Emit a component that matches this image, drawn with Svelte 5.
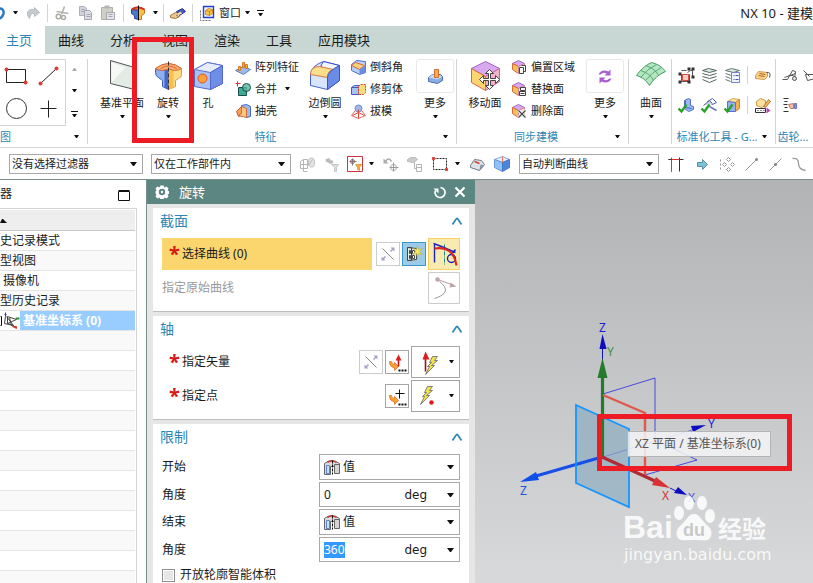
<script lang="ts">
	import { onMount } from 'svelte';

	type Tool = { icon: string; label: string; menu?: boolean };

	const tabs = ['主页', '曲线', '分析', '视图', '渲染', '工具', '应用模块'];

	const featureTools: Tool[] = [
		{ icon: 'pattern', label: '阵列特征' },
		{ icon: 'unite', label: '合并', menu: true },
		{ icon: 'shell', label: '抽壳' },
	];
	const trimTools: Tool[] = [
		{ icon: 'chamfer', label: '倒斜角' },
		{ icon: 'trim', label: '修剪体' },
		{ icon: 'draft', label: '拔模' },
	];
	const faceTools: Tool[] = [
		{ icon: 'offsetFace', label: '偏置区域' },
		{ icon: 'replaceFace', label: '替换面' },
		{ icon: 'deleteFace', label: '删除面' },
	];
	const standardTools = [
		['nodes', 'layers', 'layerList'],
		['partCheck', 'toolCheck', 'boxCheck'],
	];
	const historyRows = ['史记录模式', '型视图', ' 摄像机', '型历史记录'];

	let startAngle = $state('0');
	let endAngle = $state('360');
	let endInput: HTMLInputElement;

	onMount(() => {
		endInput.focus();
		endInput.select();
	});

	const cube =
		'<path d="M1 4 7 1l6 3-6 3z" fill="#d9a8ee" stroke="#a06cc0"/><path d="M1 4l6 3v7l-6-4z" fill="#f8bf5c" stroke="#dc6a35"/><path d="M7 7l6-3v7l-6 3z" fill="#f6dde6" stroke="#c98a9c"/>';
	const check = '<path d="M0 11l3 3 5-7" fill="none" stroke="#2ba02b" stroke-width="2.4"/>';
	const bolt = (x: number, y: number) =>
		`<path transform="translate(${x} ${y})" d="M7 0h5L9 4h3L6 9h3L0 18l4-8H2l4-4H4z" fill="#f3e34a" stroke="#666" stroke-width=".8"/>`;
	const hook =
		'<path d="M3 10q0 6 5 6v3l4-4-4-4v2q-3 0-3-3z" fill="#f8a32e" stroke="#e0702c" stroke-width=".8"/><path d="M12 18h2v2h-2zM15 18h2v2h-2zM18 18h2v2h-2z" fill="#111"/>';

	// drawn on whole pixels; every other icon sits on the half-pixel grid for crisp strokes
	const flat = ['down', 'caret', 'up', 'more', 'sort'];

	const icons: Record<string, string> = {
		down: '<path d="M0 0h7L4 4H3z" fill="#111"/>',
		caret: '<path d="M0 0h5L3 3H2z" fill="#111"/>',
		up: '<path d="M0 4h5L3 1H2z" fill="#aaa"/>',
		more: '<path d="M0 0h7v1H0zM1 3h5L4 6H3z" fill="#111"/>',
		undo: '<path d="M-4 3q8-1 7 5-1 4-4 5" fill="none" stroke="#2878c8" stroke-width="2.5"/>',
		redo: '<path d="M3 13C-1 8 1 3 8 4V2l5 5-5 4V8Q4 7 3 13z" fill="#c4cacd" stroke="#b6bcbf"/>',
		cut: '<path d="M9 1 6 9M1 6l12 2" stroke="#b3b4ac" stroke-width="1.6"/><circle cx="3" cy="11" r="2.3" fill="none" stroke="#aaaba3" stroke-width="1.5"/><circle cx="8" cy="12" r="2" fill="none" stroke="#aaaba3" stroke-width="1.5"/>',
		copy: '<path d="M3 1h5l2 2v7H3z" fill="#d2d2da" stroke="#b0b0bb"/><path d="M8 5h5l2 2v7H8z" fill="#dcdce4" stroke="#a5a5b0"/><path d="M10 9h4M10 11h4M5 4h3M5 6h3" stroke="#a5a5b0"/>',
		paste: '<path d="M1 2h11v12H1z" fill="#cfcfc6" stroke="#b0b0a5"/><path d="M4 0h5v3H4z" fill="#b5b5b5"/><path d="M6 7h8v7H6z" fill="#e4e4ea" stroke="#a5a5b0"/><path d="M8 9h4M8 11h4" stroke="#a5a5b0"/>',
		revolveSmall:
			'<path d="M0 4q6-5 13 0v4l-3 2v4H7V4z" fill="#f6c341" stroke="#df6a2e"/><path d="M0 4l7 1v9l-4-1v-3L0 8z" fill="#4a78cc" stroke="#2b3f9b"/><path d="M0 4q6-4 13 0" fill="none" stroke="#d33123" stroke-width="2"/><path d="M7 0v15" stroke="#111"/>',
		hand: '<path d="M0 9l5-3 4 1-3 2 3 1-4 2-5-1z" fill="#f3c68d" stroke="#9c7041"/><path d="M6 5l6-3 3 3-6 4z" fill="#4559c0" stroke="#2b3790"/><path d="M7 8l4-2" stroke="#f6dca2" stroke-width="2"/>',
		window:
			'<path d="M1 5v10h10" fill="none" stroke="#777" stroke-dasharray="2 1"/><path d="M4 1h10v11H4z" fill="#eef4ff" stroke="#2342cf" stroke-width="1.4"/><path d="M6 5l3-2 4 1v4l-3 2-4-1z" fill="#f8c944" stroke="#c47a1d" stroke-width=".8"/><path d="M6 5l4 1 3-2M10 6v4" fill="none" stroke="#c47a1d" stroke-width=".8"/>',

		rect: '<path d="M2 4h19v13H2z" fill="#fff" stroke="#222"/><circle cx="2" cy="4" r="2" fill="#e23b32"/><circle cx="21" cy="17" r="2" fill="#e23b32"/>',
		line: '<path d="M3 18 19 3" stroke="#222"/><circle cx="3" cy="18" r="2" fill="#e23b32"/><circle cx="19" cy="3" r="2" fill="#e23b32"/>',
		circle: '<circle cx="12" cy="10" r="10" fill="#fff" stroke="#333"/>',
		plus: '<path d="M11 2v17M3 10h16" stroke="#222"/>',

		plane: '<path d="M4 0l24 7v22L4 23z" fill="#e2ebe4" stroke="#555"/><path d="M5 2l14 5L5 22z" fill="#f6f9f6"/>',
		revolve:
			'<path d="M3 8Q16-2 29 8v6q0 3-3 4l-3 2v6l-7 3V9z" fill="#fbdc84" stroke="#e8954a"/><path d="M3 9l13 1v19l-6-3v-6l-4-3q-3-1-3-5z" fill="#8fb0ee" stroke="#3d60be"/><path d="M12 10v17l4 2V10z" fill="#4268c8"/><path d="M16 10l5-1v18l-5 2z" fill="#f8c04a"/><path d="M3 8q13-10 26 0-3 2-7 2-6-3-12 0-4 0-7-2z" fill="#f8b06c" stroke="#dc6240"/><path d="M8 8q8-5 16 0" fill="none" stroke="#dc6240"/><path d="M16 1v29" stroke="#333" stroke-dasharray="4 2"/>',
		hole: '<path d="M2 9l13-7 15 3v18l-12 6-16-3z" fill="#a9c0f3" stroke="#5468d0"/><path d="M2 9l13-7 15 3-12 7z" fill="#e6eefd" stroke="#5c72d8"/><path d="M18 12l12-7v18l-12 6z" fill="#6f8ee6" stroke="#5468d0"/><circle cx="10" cy="18" r="4.5" fill="#f9a03a" stroke="#d9562f"/>',
		pattern:
			'<path d="M0 11l8-4 7 3-7 5z" fill="#9bbcea" stroke="#5c80c4"/><path d="M3 7h2v4H3zM7 3h2v5H7zM10 5h2v4h-2z" fill="#f6ae38" stroke="#d07a2a"/>',
		unite:
			'<path d="M0 2h5M2 0v5" stroke="#db332a"/><path d="M3 6h8v8H3z" fill="#41aa92" stroke="#174e4d"/><circle cx="11" cy="6" r="4" fill="#5ab8a0" fill-opacity=".8" stroke="#174e4d"/>',
		shell:
			'<path d="M6 2l5-1 4 2v10l-4 1z" fill="#9cbaf0" stroke="#4767bd"/><path d="M1 8l5-5v9l-3 1z" fill="#f3a05b" stroke="#ca5a32"/><path d="M6 3l5 2v9l-8-2 3-2z" fill="#fac880" stroke="#d56a40"/>',
		blend:
			'<path d="M1 14Q2 5 14 1l16 4v15l-12 9-17-4z" fill="#d9e5fb" stroke="#4562cc"/><path d="M14 1l16 4-7 5-12-4z" fill="#f2f6ff" stroke="#3848d8"/><path d="M1 14q0-8 9-8l14 3q-6 1-6 8z" fill="#fbdf8a" stroke="#e0764a"/><path d="M18 17q0-6 12-12v15l-12 9z" fill="#6a8ce6" stroke="#3555c8"/>',
		chamfer:
			'<path d="M1 5l5-4 9 1v11l-6 2-8-4z" fill="#b9cff8" stroke="#5070cc"/><path d="M1 6l4-3 9 3-5 4z" fill="#f8cf7a" stroke="#dc6a48"/><path d="M9 10l6-4v7l-6 2z" fill="#6a8ce6"/>',
		trim: '<path d="M1 6l3-2h5v9H1z" fill="#a9c2f4" stroke="#4159c3"/><path d="M1 6h7v7" fill="none" stroke="#4159c3"/><path d="M8 5l2-2h5v8l-2 2H8z" fill="#f8dc77" stroke="#cc4332" stroke-dasharray="2 1"/>',
		draft:
			'<path d="M8 3 1 12l7 3 7-3z" fill="#fff" stroke="#e06a60"/><circle cx="8" cy="5" r="3.5" fill="#9fb9ed" stroke="#6f8bd0"/><path d="M8 6v9M2 12l6-3 6 3" fill="none" stroke="#dc4537"/>',
		moreFeature:
			'<path d="M9 17l4-3h8l2 2v4l-5 3-9-2z" fill="#88aee5" stroke="#4a6ba9"/><path d="M9 17l9 2 5-3-5-2h-5z" fill="#c4d8f4"/><path d="M15 9h4v8h-4z" fill="#f8a952" stroke="#d56c2b"/>',
		moveFace:
			'<path d="M2 8l14-7 14 7-14 8z" fill="#d8a9ef" stroke="#a45fc8"/><path d="M2 8l14 8v14L2 22z" fill="#fcd570" stroke="#e0624a"/><path d="M16 16l14-8v13l-14 9z" fill="#f3b2cc" stroke="#cc6a9a"/><path d="M20 9l4 4h-3v5h5v-3l4 4-4 4v-3h-5v5h3l-4 4-4-4h3v-5h-5v3l-4-4 4-4v3h5v-5h-3z" fill="#fff" stroke="#444"/>',
		offsetFace: cube + '<path d="M8 8h4v6H8zM10 6h4v6h-2" fill="#fff" stroke="#444"/>',
		replaceFace: cube + '<path d="M9 6h5v3H9zM8 10h6v4H8z" fill="#fff" stroke="#444"/><path d="M9 12h4" stroke="#444"/>',
		deleteFace: cube + '<path d="M7 7l7 7M14 7l-7 7" stroke="#fff" stroke-width="3"/><path d="M7 7l7 7M14 7l-7 7" stroke="#444" stroke-width="1.2"/>',
		moreSync:
			'<path d="M9 14q3-6 10-3l2-2v6h-6l2-2q-3-2-6 1zM22 18q-3 6-10 3l-2 2v-6h6l-2 2q3 2 6-1z" fill="#a95fce"/>',
		surface:
			'<path d="M1 15Q7 6 16 2q9 2 14 9-10 4-16 14Q9 17 1 15z" fill="#b4e6c0" stroke="#4c9c6a"/><path d="M5 10q10 3 13 10M10 5q10 3 13 10M5 17Q12 8 21 4M10 20q7-9 16-13" fill="none" stroke="#5aa878"/>',

		nodes: '<path d="M3 3h5M12 3h2v6M3 13V7h8v7H3zM9 5l3-2" fill="none" stroke="#555"/><path d="M4 7h6v6H4z" fill="#fbd0c4" stroke="#dc4b3e"/><path d="M0 5h3v3H0zM9 0h3v3H9zM13 0h3v3h-3zM13 8h3v3h-3zM0 13h3v3H0zM9 13h3v3H9z" fill="#333"/>',
		layers:
			'<path d="M1 3l6-2 8 2-7 2z" fill="#d8ece2" stroke="#55645e"/><path d="M1 6l7 2 7-2M1 9l7 2 7-2M1 12l7 3 7-3" fill="none" stroke="#55645e"/>',
		layerList:
			'<path d="M1 3l6-2 8 2-6 2z" fill="#d8ece2" stroke="#66756f"/><path d="M1 6l6 2M1 9l5 2M1 12l5 2" fill="none" stroke="#66756f"/><path d="M7 5h8v10H7z" fill="#f1f3ff" stroke="#7482cc"/><path d="M9 8h1M11 8h3M9 12h1M11 12h3" stroke="#4251ba"/>',
		tag: '<path d="M1 8l3-4 9 1v4l-3 3-9-1z" fill="#fbd18a" stroke="#d39a4a"/><path d="M5 6l6 1M4 8l6 1" stroke="#a76522"/><path d="M12 5q5-1 3 5" fill="none" stroke="#555"/>',
		partCheck:
			'<path d="M6 3l4-2 2 1v6l3 1v3l-5 2-4-3z" fill="#9bb8f2" stroke="#5470c4"/><path d="M7 3v7l6 1" fill="none" stroke="#4464c8"/>' + check,
		toolCheck:
			'<path d="M6 4l5-3 4 4-4 2z" fill="#fff" stroke="#4458ce"/><path d="M2 8l6-5 3 3" fill="#c4d2f4" stroke="#667"/><path d="M8 9l7 4" stroke="#6b7ac0" stroke-width="1.6"/>' + check,
		boxCheck:
			'<path d="M3 4l5-3 7 1-4 3z" fill="#fbe29f" stroke="#d9a24a"/><path d="M11 5l4-3v9l-4 3z" fill="#f8b04a" stroke="#d58438"/><path d="M3 4l8 1v9H3z" fill="#94b2f2" stroke="#5873ca"/>' + check,
		nameEdit:
			'<path d="M2 4l4-3 5 2v5l-4 2-5-2z" fill="#fae39d" stroke="#cf954a"/><path d="M9 9l5-7 2 2-5 6z" fill="#f6b750" stroke="#9c6838" stroke-width=".8"/><path d="M1 11h10v4H1z" fill="#fff" stroke="#333"/><path d="M3 13h1M6 13h1M9 13h1" stroke="#222"/><path d="M12 10l4 3-4 3z" fill="#bb42b6"/>',
		gearA: '<path d="M0 12h5l5-9 3 1-1 7M6 8h5M2 10l11-4" fill="none" stroke="#555"/><circle cx="12" cy="11" r="2" fill="#ddd" stroke="#555"/>',
		gearB: '<path d="M1 3l6 6M3 7h8l3-5M3 7l2 6 8-2" fill="none" stroke="#555"/>',
		gearHand:
			'<path d="M1 1h5M2 4h3M1 7h4M2 10h3M1 14h5" stroke="#333"/><path d="M6 7l5-1v5H8z" fill="#f5c1a3" stroke="#b97b5c"/><path d="M12 6h2v5h-2z" fill="#8894dc" stroke="#6874c6"/>',

		assembly:
			'<path d="M1 5l3-2h4v9H1zM1 8h7M4 3v12h4" fill="none" stroke="#b5b5b5"/><ellipse cx="12" cy="6" rx="3" ry="4.5" fill="#e4e4e4" stroke="#bbb"/><path d="M9 9l4-6" stroke="#bbb"/>',
		filterUndo:
			'<path d="M2 3q5-3 5 1 4-1 2 3-4 1-4-1-3 0-3-3z" fill="#bbb"/><path d="M8 8h7l-2 3v4h-2v-4z" fill="#ddd" stroke="#c8c8c8"/>',
		pickFilter:
			'<path d="M0 0h15v15H0z" fill="#fff" stroke="#cf3340"/><circle cx="5" cy="5" r="2" fill="none" stroke="#c05068"/><path d="M5 2v7M2 5h7" stroke="#777"/><path d="M8 8h6l-2 3v3l-2-1v-2z" fill="#f6b03a" stroke="#d99030" stroke-width=".8"/>',
		rotatePoint:
			'<path d="M8 5Q5 0 2 5" fill="none" stroke="#aaa" stroke-width="1.6"/><path d="M0 2v5h5z" fill="#aaa"/><circle cx="10" cy="11" r="3" fill="none" stroke="#aaa"/><path d="M10 6v9M6 11h9" stroke="#999"/>',
		treeHand: '<path d="M0 3l3-2h5l2 2-4 3-6-1z" fill="#ccc" stroke="#bbb"/><path d="M9 8h5v7H9zM9 11h5M7 6v6h2" fill="none" stroke="#b5b5b5"/>',
		marquee:
			'<path d="M2 3h13v11H2z" fill="none" stroke="#222" stroke-dasharray="2 1"/><path d="M1 2h2v2H1zM14 13h2v2h-2z" fill="#e23b32" stroke="#e23b32"/>',
		roundBody:
			'<path d="M1 9l4-6 7 1 3 4-5 6-9-3z" fill="#dde2e8" stroke="#717987"/><path d="M11 8l4 1-5 5z" fill="#8793a7"/><path d="M5 5l5 2" stroke="#d73b33" stroke-width="1.5"/>',
		blueCube:
			'<path d="M1 4l8-3 7 3-7 3z" fill="#e5effe" stroke="#88a4e0"/><path d="M1 4l8 3v9l-8-4z" fill="#8ec2f6" stroke="#6a98dc"/><path d="M9 7l7-3v8l-7 4z" fill="#4a86de" stroke="#4a78c8"/><path d="M9 1v6" stroke="#e67c62"/>',
		cross: '<path d="M4 8v8M12 2v14M12 4h4" fill="none" stroke="#333"/><path d="M4 2v14M1 4h11" fill="none" stroke="#df2f2c"/><path d="M1 4h3" stroke="#333"/>',
		arrowRight: '<path d="M4 6h5V3l5 5-5 5v-3H4z" fill="#79c5d5" stroke="#5a8fac"/>',
		quad: '<path d="M1 3v2M1 7v2M1 11v2" stroke="#999"/><path d="M9 1l2 2-2 2-2-2zM9 11l2 2-2 2-2-2zM5 6l2 2-2 2-2-2zM13 6l2 2-2 2-2-2z" fill="#fff" stroke="#999"/>',
		segment: '<path d="M2 14 13 3" stroke="#999"/><circle cx="13" cy="3" r="1.5" fill="#888"/>',
		midpoint: '<path d="M2 14 14 2" stroke="#999"/><circle cx="8" cy="8" r="1.6" fill="#888"/>',
		spline: '<path d="M1 2q6-1 6 5t7 7" fill="none" stroke="#999" stroke-width="1.3"/>',

		maximize: '<path d="M0 1h11v9H0z" fill="none" stroke="#111"/><path d="M0 0h11" stroke="#111"/>',
		sort: '<path d="M0 5h7L3 1H2z" fill="#111"/>',
		csys: '<path d="M0 4h1v9H0" fill="none" stroke="#111"/><path d="M6 4l7 9-6-2V4l9 3-9 4M9 5l2 8M5 4l-1 7 9 2" fill="none" stroke="#444"/><path d="M5 0v4M4 2h2" stroke="#2330d0"/><path d="M15 5h4v2h-3z" fill="#22922e"/><path d="M12 14h4v2z" fill="#d23a30" stroke="#d23a30"/>',

		gear: '<path d="M5 0h3l1 2 2-1 2 2-1 2 2 1v2l-2 1 1 2-2 2-2-1-1 2H5l-1-2-2 1-2-2 1-2-1-1V6l1-1-1-2 2-2 2 1z" fill="#fff"/><circle cx="6.5" cy="6.5" r="3.2" fill="#5c8681"/><circle cx="6.5" cy="6.5" r="1.2" fill="#fff"/>',
		reset: '<path d="M8 2a5 5 0 1 1-5 3" fill="none" stroke="#fff" stroke-width="1.7"/><path d="M1 3h5v5z" fill="#fff"/>',
		close: '<path d="M1 1l9 9M10 1l-9 9" stroke="#fff" stroke-width="2.2"/>',
		collapse: '<path d="M1 8l4-6h1l4 6" fill="none" stroke="#2b86b4" stroke-width="1.7"/>',
		flip: '<path d="M5 5l11 11" stroke="#888"/><path d="M5 16l3-3M13 8l3-3" stroke="#a6a3c8" stroke-width="1.5"/><path d="M13 4h4v4zM4 13v4h4z" fill="#a6a3c8"/>',
		sketch:
			'<path d="M4 4h4v13H4zM4 4l9 1v11l-9 1" fill="#e4efe8" stroke="#444"/><path d="M6 7h1v3H6zM9 7h2v3H9zM6 12h1v3H6zM9 12h2v3H9z" fill="#fff" stroke="#444"/><path d="M14 2l1 4 4-1-3 3 3 3-4-1-1 4-1-4-4 1 3-3-2-3 3 1z" fill="#f8e860" stroke="#b8a74b" stroke-width=".6"/>',
		curveRule:
			'<path d="M5 5v18" stroke="#1724be" stroke-width="1.4"/><path d="M15 5v20" stroke="#18837c" stroke-dasharray="4 1 1 1"/><circle cx="22" cy="19" r="4" fill="none" stroke="#1724be" stroke-width="1.4"/><path d="M4 4l8 3 14 6M22 15l4-5" fill="none" stroke="#1724be" stroke-width="1.4"/><path d="M5 9q19-3 22 17" fill="none" stroke="#df251b" stroke-width="2.2"/>',
		originCurve:
			'<circle cx="8" cy="6" r="2.2" fill="#bda6a8"/><path d="M8 6l14 5" stroke="#bda6a8" stroke-width="1.2"/><path d="M21 9l6 4-7 1z" fill="#bda6a8"/><path d="M10 8q14 11-5 17" fill="none" stroke="#999"/>',
		vectorDialog: hook + '<path d="M12 15V8" stroke="#c60f13" stroke-width="1.6"/><path d="M9 9l3-6 3 6z" fill="#d81e1d"/>',
		pointDialog: hook + '<path d="M13 4v9M9 8h9" stroke="#111"/>',
		vectorInfer: '<path d="M5 22V7" stroke="#9d1119" stroke-width="1.6"/><path d="M2 10l3-8 4 8z" fill="#db1c20"/>' + bolt(5, 7),
		pointInfer: bolt(0, 3) + '<circle cx="11" cy="19" r="2.2" fill="#dd171a"/>',
		limit: '<path d="M0 4q7-6 15 0v9l-4 1V7H6v8H0z" fill="#d8dade" stroke="#666"/><path d="M2 6h3v8H2z" fill="#cfe0fc" stroke="#5b83d0"/><path d="M10 5h5v9h-5z" fill="#d4d4d4" stroke="#666"/><path d="M3 3q4-3 9 0" fill="none" stroke="#d72e26" stroke-width="1.4"/><path d="M8 1v14" stroke="#111" stroke-dasharray="3 1"/>',
	};
</script>

{#snippet icon(name: string, w: number, h: number)}
	{@const origin = flat.includes(name) ? 0 : -0.5}
	<svg class="icon" width={w} height={h} viewBox="{origin} {origin} {w} {h}" aria-hidden="true">{@html icons[name]}</svg>
{/snippet}

{#snippet bigTool(name: string, label: string, menu: boolean, framed: boolean)}
	<button class="big" class:framed>
		<span class="picture">{@render icon(name, 32, 32)}</span>
		<span>{label}</span>
		{#if menu}{@render icon('caret', 5, 4)}{/if}
	</button>
{/snippet}

{#snippet toolColumn(tools: Tool[])}
	<div class="column">
		{#each tools as tool}
			<button>
				{@render icon(tool.icon, 16, 16)}
				<span>{tool.label}</span>
				{#if tool.menu}<span class="menu">{@render icon('caret', 5, 4)}</span>{/if}
			</button>
		{/each}
	</div>
{/snippet}

{#snippet filter(label: string, narrow: boolean)}
	<span class="combo filter" class:narrow>
		<select aria-label={label}><option>{label}</option></select>
		{@render icon('down', 7, 4)}
	</span>
{/snippet}

{#snippet cardTitle(title: string)}
	<h3><button>{title}{@render icon('collapse', 12, 10)}</button></h3>
{/snippet}

<div class="app">
	<header class="titlebar">
		<div class="quick">
			<button aria-label="撤销">{@render icon('undo', 5, 16)}</button>
			<button class="drop" aria-label="撤销列表">{@render icon('caret', 5, 4)}</button>
			<button aria-label="重做">{@render icon('redo', 14, 16)}</button>
			<i class="rule"></i>
			<button aria-label="剪切">{@render icon('cut', 14, 16)}</button>
			<button aria-label="复制">{@render icon('copy', 17, 16)}</button>
			<button aria-label="粘贴">{@render icon('paste', 16, 16)}</button>
			<i class="rule"></i>
			<button aria-label="旋转">{@render icon('revolveSmall', 14, 16)}</button>
			<button class="drop" aria-label="更多命令">{@render icon('caret', 5, 4)}</button>
		</div>
		<div class="quick window">
			<i class="rule"></i>
			<button aria-label="触控">{@render icon('hand', 16, 14)}</button>
			<i class="rule"></i>
			<button class="window-menu">
				{@render icon('window', 17, 16)}窗口<span class="drop">{@render icon('caret', 5, 4)}</span>
			</button>
			<button aria-label="自定义">{@render icon('more', 7, 7)}</button>
		</div>
		<span class="product">NX 10 - 建模</span>
	</header>

	<nav class="tabs">
		{#each tabs as tab, i}
			<button class:active={i === 0}>{tab}</button>
		{/each}
	</nav>

	<div class="ribbon">
		<section class="group sketch">
			<div class="tools">
				<div class="gallery">
					{#each ['rect', 'line', 'circle', 'plus'] as shape}
						<button aria-label={shape}>{@render icon(shape, 24, 22)}</button>
					{/each}
				</div>
				<div class="scroller">
					<button aria-label="上一行">{@render icon('up', 5, 4)}</button>
					<button aria-label="下一行">{@render icon('caret', 5, 4)}</button>
					<button aria-label="展开">{@render icon('more', 7, 7)}</button>
				</div>
			</div>
			<footer><span>图</span>{@render icon('caret', 5, 4)}</footer>
		</section>
		<section class="group feature">
			<div class="tools">
				{@render bigTool('plane', '基准平面', true, false)}
				{@render bigTool('revolve', '旋转', true, false)}
				{@render bigTool('hole', '孔', false, false)}
				{@render toolColumn(featureTools)}
				{@render bigTool('blend', '边倒圆', true, false)}
				{@render toolColumn(trimTools)}
				{@render bigTool('moreFeature', '更多', true, true)}
			</div>
			<footer><span>特征</span>{@render icon('caret', 5, 4)}</footer>
		</section>
		<section class="group sync">
			<div class="tools">
				{@render bigTool('moveFace', '移动面', false, false)}
				{@render toolColumn(faceTools)}
				{@render bigTool('moreSync', '更多', true, true)}
			</div>
			<footer><span>同步建模</span>{@render icon('caret', 5, 4)}</footer>
		</section>
		<section class="group surface">
			<div class="tools">{@render bigTool('surface', '曲面', true, false)}</div>
		</section>
		<section class="group standard">
			<div class="tools">
				{#each standardTools as row, i}
					<div class="strip">
						{#each row as name}
							<button aria-label={name}>{@render icon(name, 17, 17)}</button>
						{/each}
						<i class="rule"></i>
						<button aria-label="属性">{@render icon(i === 0 ? 'tag' : 'nameEdit', 17, 17)}</button>
					</div>
				{/each}
			</div>
			<footer><span>标准化工具 - G...</span>{@render icon('caret', 5, 4)}</footer>
		</section>
		<section class="group gears">
			<div class="tools">
				<div class="strip">
					<button aria-label="圆柱齿轮">{@render icon('gearA', 16, 16)}</button>
					<button aria-label="锥齿轮">{@render icon('gearB', 16, 16)}</button>
				</div>
				<div class="strip">
					<button aria-label="弹簧">{@render icon('gearHand', 16, 16)}</button>
				</div>
			</div>
			<footer><span>齿轮...</span></footer>
		</section>
	</div>

	<div class="selection">
		{@render filter('没有选择过滤器', true)}
		{@render filter('仅在工作部件内', false)}
		<button aria-label="装配">{@render icon('assembly', 16, 16)}</button>
		<button aria-label="重置过滤器">{@render icon('filterUndo', 16, 16)}</button>
		<button class="split" aria-label="选择过滤">{@render icon('pickFilter', 16, 16)}{@render icon('caret', 6, 4)}</button>
		<button aria-label="旋转点">{@render icon('rotatePoint', 16, 16)}</button>
		<button aria-label="导航">{@render icon('treeHand', 16, 16)}</button>
		<button class="split" aria-label="框选">{@render icon('marquee', 18, 18)}{@render icon('caret', 6, 4)}</button>
		<button aria-label="实体">{@render icon('roundBody', 16, 16)}</button>
		<button aria-label="面">{@render icon('blueCube', 18, 18)}</button>
		{@render filter('自动判断曲线', false)}
		<button aria-label="相交处停止">{@render icon('cross', 18, 18)}</button>
		<button aria-label="跟随圆角">{@render icon('arrowRight', 18, 16)}</button>
		<button aria-label="象限">{@render icon('quad', 16, 16)}</button>
		<button aria-label="端点">{@render icon('segment', 16, 16)}</button>
		<button aria-label="中点">{@render icon('midpoint', 16, 16)}</button>
		<button aria-label="样条">{@render icon('spline', 16, 16)}</button>
	</div>

	<main>
		<aside class="navigator">
			<header>器<button aria-label="最大化">{@render icon('maximize', 12, 11)}</button></header>
			<ul>
				<li class="head">{@render icon('sort', 7, 5)}</li>
				{#each historyRows as row}
					<li>{row}</li>
				{/each}
				<li class="selected">{@render icon('csys', 20, 18)}<strong>基准坐标系 (0)</strong></li>
				{#each Array(14) as _}
					<li></li>
				{/each}
			</ul>
		</aside>

		<form class="dialog" onsubmit={(e) => e.preventDefault()}>
			<header>
				{@render icon('gear', 14, 14)}
				<h2>旋转</h2>
				<button type="button" aria-label="重置">{@render icon('reset', 14, 14)}</button>
				<button type="button" aria-label="关闭">{@render icon('close', 12, 12)}</button>
			</header>
			<section class="card">
				{@render cardTitle('截面')}
				<div class="row">
					<span class="pick current"><b>*</b>选择曲线 (0)</span>
					<button class="tool dim" aria-label="反向">{@render icon('flip', 22, 22)}</button>
					<button class="tool pressed" aria-label="绘制截面">{@render icon('sketch', 22, 22)}</button>
					<button class="tool large hot" aria-label="曲线">{@render icon('curveRule', 30, 30)}</button>
				</div>
				<div class="row">
					<span class="pick muted">指定原始曲线</span>
					<button class="tool large dim" aria-label="原始曲线">{@render icon('originCurve', 30, 30)}</button>
				</div>
			</section>
			<section class="card">
				{@render cardTitle('轴')}
				<div class="row">
					<span class="pick"><b>*</b>指定矢量</span>
					<button class="tool dim" aria-label="反向">{@render icon('flip', 22, 22)}</button>
					<button class="tool" aria-label="矢量对话框">{@render icon('vectorDialog', 22, 22)}</button>
					<button class="tool wide" aria-label="自动判断的矢量">{@render icon('vectorInfer', 22, 26)}{@render icon('caret', 5, 4)}</button>
				</div>
				<div class="row">
					<span class="pick"><b>*</b>指定点</span>
					<button class="tool" aria-label="点对话框">{@render icon('pointDialog', 22, 22)}</button>
					<button class="tool wide" aria-label="自动判断的点">{@render icon('pointInfer', 22, 26)}{@render icon('caret', 5, 4)}</button>
				</div>
			</section>
			<section class="card limits">
				{@render cardTitle('限制')}
				<div class="field">
					<label for="start">开始</label>
					<span class="combo">
						{@render icon('limit', 16, 16)}
						<select id="start"><option>值</option></select>
						{@render icon('down', 7, 4)}
					</span>
				</div>
				<div class="field">
					<label for="start-angle">角度</label>
					<span class="combo">
						<input id="start-angle" bind:value={startAngle} />
						<span class="unit">deg</span>
						{@render icon('down', 7, 4)}
					</span>
				</div>
				<div class="field">
					<label for="end">结束</label>
					<span class="combo">
						{@render icon('limit', 16, 16)}
						<select id="end"><option>值</option></select>
						{@render icon('down', 7, 4)}
					</span>
				</div>
				<div class="field">
					<label for="end-angle">角度</label>
					<span class="combo">
						<input id="end-angle" bind:value={endAngle} bind:this={endInput} />
						<span class="unit">deg</span>
						{@render icon('down', 7, 4)}
					</span>
				</div>
				<label class="check"><input type="checkbox" />开放轮廓智能体积</label>
			</section>
		</form>

		<div class="viewport">
			<svg class="scene" width="338" height="403" viewBox="475 180 338 403">
				<!-- datum planes -->
				<path d="M603 394l52-16v62l42 20-52 15" fill="none" stroke="#3a3ae0" stroke-width=".9" />
				<path d="M603 457l89-27" stroke="#6a6ae0" stroke-width=".9" />
				<path d="M576 405l53 24v78l-53-24z" fill="#7ca4bd" fill-opacity=".55" />
				<path d="M602.5 457V345" stroke="#1111c8" />
				<path d="M602.5 334l4 15h-7z" fill="#0c0cc0" />
				<path d="M602.5 457v-80" stroke="#257b2b" stroke-width="3.2" />
				<path d="M602.5 358l5 20h-10z" fill="#257b2b" />
				<path d="M603 395l42 18v62" fill="none" stroke="#e2574c" stroke-width="2.4" />
				<path d="M602 457l-66 19" stroke="#174fe8" stroke-width="3.2" />
				<path d="M520 482l16-10 3 8z" fill="#0f4ee8" />
				<path d="M602 457l53 24" stroke="#b02a32" stroke-width="3.2" />
				<path d="M670 488l-14-11-4 8z" fill="#d83232" />
				<path d="M670 488l8 4" stroke="#1111c8" />
				<path d="M687 495l-9-8-4 6z" fill="#0c0cc0" />
				<path d="M706 425l-15 1 2 6z" fill="#0c0cc0" />
				<path d="M576 405l53 24v78l-53-24z" fill="none" stroke="#1596ff" stroke-width="1.8" />
				<text x="599" y="332" fill="#1b1bd0">Z</text>
				<text x="607" y="356" fill="#3b9343">Y</text>
				<text x="708" y="428" fill="#1b1bd0">Y</text>
				<text x="520" y="495" fill="#2050e8">Z</text>
				<text x="662" y="500" fill="#d83232">X</text>
				<text x="688" y="502" fill="#4c4cd8">X</text>
				<!-- watermark -->
				<g fill="#fff" fill-opacity=".85">
					<text class="brand" x="623" y="538">Bai</text>
					<ellipse cx="679" cy="513" rx="5" ry="7" />
					<ellipse cx="689" cy="503" rx="5" ry="7" />
					<ellipse cx="702" cy="503" rx="5" ry="7" />
					<ellipse cx="710" cy="516" rx="5" ry="7" />
					<path d="M694 514c5 0 7 5 11 9 4 4 8 7 6 13-2 6-8 4-17 4s-15 2-17-4c-2-6 2-9 6-13 4-4 6-9 11-9z" />
					<text class="du" x="683" y="536">du</text>
					<text class="cjk" x="718" y="538">经验</text>
					<text class="site" x="624" y="560">jingyan.baidu.com</text>
				</g>
			</svg>
			<div class="tooltip">XZ 平面 / 基准坐标系(0)</div>
			<div class="callout plane-callout"></div>
		</div>
	</main>
	<div class="callout revolve-callout"></div>
</div>

<style>
	:global(body) {
		background: #fff;
		overflow: hidden;
	}

	.app {
		position: relative;
		display: flex;
		flex-direction: column;
		height: 100vh;
		overflow: hidden;
		color: #1a1a1a;
		font: 12px/16px 'Noto Sans', 'Noto Sans CJK SC', sans-serif;
		white-space: nowrap;
	}

	button,
	input,
	select {
		margin: 0;
		padding: 0;
		border: 0;
		background: none;
		color: inherit;
		font: inherit;
	}

	button {
		display: flex;
		align-items: center;
		flex: none;
	}

	input,
	select {
		appearance: none;
		outline: 0;
		min-width: 0;
		flex: 1;
	}

	input::selection {
		background: #3399ff;
		color: #fff;
	}

	.icon {
		display: block;
		flex: none;
	}

	.rule {
		width: 1px;
		height: 18px;
		background: #d4d4d4;
	}

	/* title bar */
	.titlebar,
	.quick {
		display: flex;
		align-items: center;
		flex: none;
	}

	.titlebar {
		height: 26px;
	}

	.quick {
		gap: 7px;
	}

	.quick.window {
		gap: 6px;
		margin-left: 4px;
	}

	.drop {
		padding: 0 1px;
	}

	.window-menu {
		gap: 3px;
		font-size: 11px;
	}

	.product {
		margin-left: auto;
		font-size: 13px;
	}

	/* tabs */
	.tabs {
		display: flex;
		flex: none;
		height: 28px;
		background: #c8d7d4;
		font-size: 13px;
	}

	.tabs button {
		padding: 0 13px;
	}

	.tabs .active {
		padding-left: 6px;
		background: #fff;
		color: #2b86b4;
	}

	/* ribbon */
	.ribbon {
		display: flex;
		flex: none;
		padding: 5px 0 3px;
		border-bottom: 1px solid #d8d8d8;
		font-size: 11px;
	}

	.group {
		display: flex;
		flex-direction: column;
		box-sizing: border-box;
		flex: none;
		height: 85px;
		border-right: 1px solid #d4d4d4;
	}

	.tools {
		display: flex;
		flex: 1;
	}

	.group footer {
		display: flex;
		align-items: center;
		height: 14px;
		padding: 2px 8px 0 0;
		color: #2b86b4;
	}

	.group footer span {
		flex: 1;
		text-align: center;
	}

	.sketch {
		width: 88px;
	}

	.sketch footer span {
		text-align: left;
	}

	.gallery {
		display: grid;
		grid-template-columns: 32px 33px;
		place-items: center;
		height: 65px;
		border: 1px solid #d4d4d4;
		border-left: 0;
	}

	.scroller {
		display: flex;
		flex-direction: column;
		align-items: center;
		gap: 18px;
		padding: 8px 0 0 5px;
	}

	.feature {
		width: 369px;
	}

	.feature .tools {
		padding-left: 12px;
	}

	.big {
		flex-direction: column;
		align-self: flex-start;
		width: 44px;
		padding-top: 1px;
	}

	.big .picture {
		margin-bottom: 3px;
	}

	.big > .icon {
		margin-top: 4px;
	}

	.big.framed {
		width: 38px;
		margin-left: 9px;
		padding: 0;
	}

	.framed .picture {
		padding: 0 2px;
		border: 1px solid #e8e8e8;
		border-radius: 3px;
		margin-bottom: 2px;
	}

	.column {
		display: flex;
		flex-direction: column;
		gap: 6px;
		width: 66px;
	}

	.column button {
		gap: 4px;
	}

	.column .menu {
		margin-left: 4px;
	}

	.feature .big:nth-child(2) {
		width: 48px;
	}

	.feature .big:nth-child(3) {
		width: 32px;
	}

	.feature .column {
		width: 68px;
		margin-left: 11px;
	}

	.feature .big + .column:nth-child(6) {
		width: 57px;
		margin-left: 3px;
	}

	.sync {
		width: 172px;
	}

	.sync .tools {
		padding-left: 6px;
	}

	.sync .column {
		margin-left: 4px;
	}

	.surface {
		width: 43px;
	}

	.standard {
		width: 104px;
	}

	.standard .tools,
	.gears .tools {
		flex-direction: column;
		padding: 1px 0 0 6px;
	}

	.strip {
		display: flex;
		align-items: center;
		gap: 6px;
		height: 30px;
	}

	.gears {
		border-right: 0;
	}

	.gears .strip {
		gap: 4px;
	}

	/* selection bar */
	.selection {
		display: flex;
		align-items: center;
		flex: none;
		gap: 8px;
		height: 31px;
		padding-left: 9px;
		border-bottom: 1px solid #78908d;
	}

	.combo {
		display: flex;
		align-items: center;
		box-sizing: border-box;
		flex: none;
		gap: 3px;
		padding: 0 5px 0 4px;
		border: 1px solid #a9a9a9;
		background: #fff;
	}

	.filter {
		width: 140px;
		height: 20px;
		padding-left: 2px;
		font-size: 11px;
	}

	.filter.narrow {
		width: 134px;
	}

	.split {
		gap: 6px;
	}

	main {
		display: flex;
		flex: 1;
		min-height: 0;
	}

	/* part navigator */
	.navigator {
		box-sizing: border-box;
		flex: none;
		width: 147px;
		border-right: 1px solid #78908d;
		overflow: hidden;
	}

	.navigator header {
		display: flex;
		align-items: center;
		justify-content: space-between;
		height: 28px;
		padding-right: 16px;
	}

	.navigator header button {
		padding-top: 3px;
	}

	.navigator ul {
		margin: 0 9px 0 0;
		padding: 1px 1px 0 0;
		border: 1px solid #d4d4d4;
		border-left: 0;
		list-style: none;
	}

	.navigator li {
		display: flex;
		align-items: center;
		box-sizing: border-box;
		height: 20px;
		border-bottom: 1px solid #e4e4e4;
		white-space: pre;
	}

	.navigator li:nth-child(odd) {
		background: #f9f9f9;
	}

	.navigator .head {
		height: 21px;
		border-color: #c8c8c8;
	}

	.navigator li.head {
		background: #eee;
	}

	.navigator strong {
		flex: 1;
		padding-left: 3px;
		background: #99ccff;
		color: #fff;
		line-height: 19px;
	}

	/* revolve dialog */
	.dialog {
		flex: none;
		width: 328px;
		background: #e6e6e6;
		overflow: hidden;
	}

	.dialog header {
		display: flex;
		align-items: center;
		gap: 8px;
		height: 24px;
		padding: 0 9px 0 8px;
		background: #5c8681;
		color: #fff;
	}

	.dialog h2 {
		flex: 1;
		margin: 0 0 0 2px;
		font-size: 13px;
		font-weight: 400;
	}

	.card {
		box-sizing: border-box;
		height: 104px;
		margin: 4px 6px 0;
		padding: 0 9px;
		border-bottom: 1px solid #bdbdbd;
		background: #fff;
	}

	.card.limits {
		height: auto;
	}

	.card h3 {
		margin: 0 -4px 4px -2px;
		color: #2b86b4;
		font-size: 14px;
		font-weight: 400;
	}

	.card h3 button {
		justify-content: space-between;
		width: 100%;
		height: 26px;
		padding-right: 1px;
	}

	.row {
		display: flex;
		align-items: center;
		gap: 2px;
		height: 32px;
		margin-bottom: 2px;
	}

	.pick {
		display: flex;
		align-items: center;
		flex: 1;
		height: 32px;
		margin-right: 2px;
		padding-left: 7px;
	}

	.pick b {
		width: 13px;
		color: #d61a1a;
		font-size: 20px;
		line-height: 16px;
	}

	.pick.current {
		background: #fbd66f;
	}

	.pick.muted {
		padding-left: 0;
		color: #999;
	}

	.tool {
		justify-content: center;
		box-sizing: border-box;
		width: 24px;
		height: 24px;
		border: 1px solid #a5a5a5;
	}

	.tool.dim {
		border-color: #ccc;
	}

	.tool.pressed {
		border-color: #3b97c9;
		background: #9bcbe6;
	}

	.tool.large {
		width: 32px;
		height: 32px;
	}

	.tool.hot {
		border-color: #f9cf60;
		background: #f9eab0;
	}

	.tool.wide {
		justify-content: space-between;
		width: 49px;
		height: 32px;
		padding: 0 5px 0 8px;
	}

	.field {
		display: flex;
		align-items: center;
		justify-content: space-between;
		margin-bottom: 2px;
	}

	.field .combo {
		width: 141px;
		height: 26px;
	}

	.field .combo:has(input) {
		height: 25px;
	}

	.unit {
		margin-right: 17px;
		font-family: 'DejaVu Sans', sans-serif;
	}

	.check {
		display: flex;
		align-items: center;
		gap: 5px;
		height: 22px;
	}

	.check input {
		box-sizing: border-box;
		flex: none;
		width: 13px;
		height: 13px;
		border: 1px solid #8e8f8f;
		background: #e6e6e6;
		box-shadow: inset 0 0 0 1px #fff;
	}

	/* graphics window */
	.viewport {
		position: relative;
		flex: 1;
		overflow: hidden;
		background: linear-gradient(#b2b3b5, #d8d9da);
	}

	.scene {
		position: absolute;
		top: 0;
		left: 0;
		font-size: 12px;
	}

	.brand {
		font: bold 32px 'Liberation Sans', sans-serif;
	}

	.du {
		fill: #bfc0c2;
		font: bold 18px 'Liberation Sans', sans-serif;
	}

	.cjk {
		font: bold 24px 'Noto Sans CJK SC', sans-serif;
	}

	.site {
		font: 16px 'DejaVu Sans', sans-serif;
	}

	.tooltip {
		position: absolute;
		top: 251px;
		left: 152px;
		padding: 4px 9px 4px 7px;
		border: 1px solid #b5b5b5;
		background: rgba(244, 244, 246, 0.85);
		color: #555;
	}

	.callout {
		position: absolute;
		box-sizing: border-box;
		border: 5px solid #ed1c24;
		pointer-events: none;
	}

	.plane-callout {
		top: 234px;
		left: 122px;
		width: 195px;
		height: 57px;
	}

	.revolve-callout {
		top: 37px;
		left: 132px;
		width: 62px;
		height: 106px;
	}
</style>
